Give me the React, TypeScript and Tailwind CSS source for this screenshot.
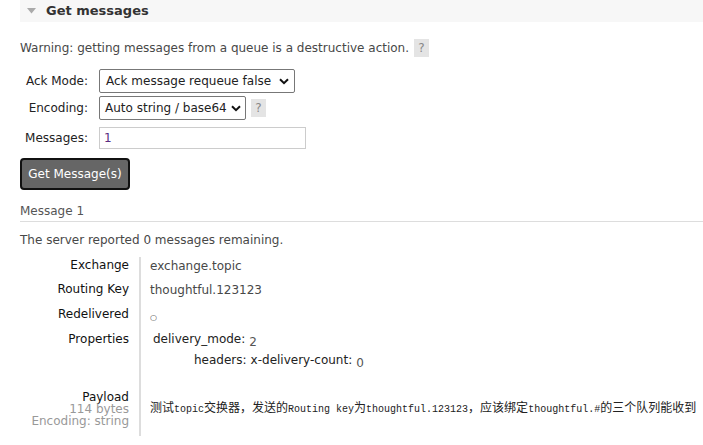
import React from "react"

const font = { fontFamily: '"DejaVu Sans", Verdana, sans-serif' }

function Help() {
  return <span className="inline-flex items-center justify-center w-[15px] h-[18px] bg-[#e4e4e4] text-[#888] text-[12px]">?</span>
}

function Chevron() {
  return <svg width="10" height="7" viewBox="0 0 10 7" className="shrink-0"><path d="M1 1.2 L5 5.2 L9 1.2" stroke="#111" strokeWidth="2" fill="none" /></svg>
}

const Latin = ({ children }: { children: React.ReactNode }) =>
  <span className="text-[10px]" style={{ fontFamily: '"Liberation Mono", monospace' }}>{children}</span>

export default function App() {
  return <div className="w-[703px] h-[445px] overflow-hidden bg-white text-[12px] leading-[14px] text-[#484848]" style={font}>
    <div className="ml-5">

      <div className="h-[22px] bg-[#f7f7f7] flex items-center pl-[7px] gap-[10px]">
        <svg width="9" height="6" viewBox="0 0 9 6"><path d="M0 0 H9 L4.5 5.5 Z" fill="#aaa" /></svg>
        <span className="font-bold text-[13px] text-[#333]">Get messages</span>
      </div>

      <div className="mt-[17px] flex items-center gap-[5px]">
        <span>Warning: getting messages from a queue is a destructive action.</span>
        <Help />
      </div>

      <div className="mt-[12px] flex flex-col gap-[3px] text-[#222]">
        <div className="flex items-center">
          <span className="w-[68px] text-right mr-[11px]">Ack Mode:</span>
          <div className="w-[196px] h-[24px] border border-[#777] rounded-[2px] flex items-center justify-between pl-[6px] pr-[5px]">
            <span>Ack message requeue false</span><Chevron />
          </div>
        </div>
        <div className="flex items-center">
          <span className="w-[68px] text-right mr-[11px]">Encoding:</span>
          <div className="w-[147px] h-[24px] border border-[#777] rounded-[2px] flex items-center justify-between pl-[5px] pr-[4px]">
            <span>Auto string / base64</span><Chevron />
          </div>
          <span className="ml-[5px]"><Help /></span>
        </div>
        <div className="flex items-center mt-[4px]">
          <span className="w-[68px] text-right mr-[11px]">Messages:</span>
          <div className="w-[207px] h-[22px] border border-[#ccc] flex items-center px-[4px] text-[#5a2d82]">1</div>
        </div>
      </div>

      <button className="mt-[9px] w-[110px] h-[32px] bg-[#666] border-2 border-[#111] rounded-[4px] text-white text-[12px]">Get Message(s)</button>

      <div className="mt-[14px] pb-[3px] border-b border-[#ddd] text-[#555]">Message 1</div>

      <div className="mt-[11px]">The server reported 0 messages remaining.</div>

      <div className="mt-[10px] flex">
        <div className="w-[109px] text-right text-[#111] flex flex-col">
          <div className="h-[25px] pt-[1px]">Exchange</div>
          <div className="h-[25px]">Routing Key</div>
          <div className="h-[25px]">Redelivered</div>
          <div className="h-[25px]">Properties</div>
          <div className="h-[34px]"></div>
          <div className="leading-[12px]">Payload</div>
          <div className="leading-[12px] text-[#999]">114 bytes</div>
          <div className="leading-[12px] text-[#999]">Encoding: string</div>
        </div>
        <div className="ml-[10px] w-[2px] bg-[#ddd] h-[179px]"></div>
        <div className="ml-[9px] flex flex-col">
          <div className="h-[25px] pt-[2px]">exchange.topic</div>
          <div className="h-[25px] pt-[1px]">thoughtful.123123</div>
          <div className="h-[25px] pt-[4px] text-[8px]">○</div>
          <div className="h-[21px] pl-[3px] flex gap-[4px] text-[#222]"><span>delivery_mode:</span><span className="text-[#555] pt-[3px]">2</span></div>
          <div className="h-[34px] pl-[44px] flex gap-[4px] text-[#222]"><span>headers:</span><span>x-delivery-count:</span><span className="text-[#555] pt-[3px]">0</span></div>
          <div className="pt-[13px] text-[#222] text-[12px] whitespace-nowrap" style={{ fontFamily: '"Noto Sans CJK SC", sans-serif' }}>
            测试<Latin>topic</Latin>交换器，发送的<Latin>Routing key</Latin>为<Latin>thoughtful.123123</Latin>，应该绑定<Latin>thoughtful.#</Latin>的三个队列能收到
          </div>
        </div>
      </div>
    </div>
  </div>
}
